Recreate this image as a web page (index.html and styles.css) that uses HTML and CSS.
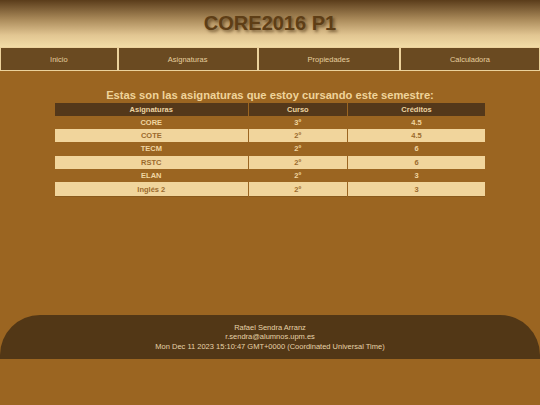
FILE: index.html
```html
<!DOCTYPE html>
<html lang="es">
<head>
<meta charset="utf-8">
<title>CORE2016 P1</title>
<link rel="stylesheet" href="styles.css">
</head>
<body>
<header class="top">
  <h1 class="title">CORE2016 P1</h1>
</header>
<nav class="menu">
  <a class="menu-item" href="#">Inicio</a>
  <a class="menu-item" href="#">Asignaturas</a>
  <a class="menu-item" href="#">Propiedades</a>
  <a class="menu-item" href="#">Calculadora</a>
</nav>
<main class="content">
  <h2 class="subtitle">Estas son las asignaturas que estoy cursando este semestre:</h2>
  <table class="subjects">
    <colgroup>
      <col class="c1"><col class="c2"><col class="c3">
    </colgroup>
    <thead>
      <tr><th>Asignaturas</th><th>Curso</th><th>Créditos</th></tr>
    </thead>
    <tbody>
      <tr><td>CORE</td><td>3º</td><td>4.5</td></tr>
      <tr><td>COTE</td><td>2º</td><td>4.5</td></tr>
      <tr><td>TECM</td><td>2º</td><td>6</td></tr>
      <tr><td>RSTC</td><td>2º</td><td>6</td></tr>
      <tr><td>ELAN</td><td>2º</td><td>3</td></tr>
      <tr><td>Inglés 2</td><td>2º</td><td>3</td></tr>
    </tbody>
  </table>
</main>
<footer class="foot">
  <p class="foot-line">Rafael Sendra Arranz</p>
  <p class="foot-line">r.sendra@alumnos.upm.es</p>
  <p class="foot-line">Mon Dec 11 2023 15:10:47 GMT+0000 (Coordinated Universal Time)</p>
</footer>
</body>
</html>
```
FILE: styles.css
```css
html, body {
  margin: 0;
  padding: 0;
}
body {
  background: #9b6521;
  font-family: "Liberation Sans", Arial, sans-serif;
  font-size: 7.5px;
  color: #f0d6a0;
  min-height: 405px;
}
.top {
  height: 47px;
  background: linear-gradient(to bottom, #5a3c1a 0%, #a88858 40%, #e2c692 75%, #f2dca6 100%);
  display: flex;
  align-items: center;
  justify-content: center;
}
.title {
  margin: 0;
  font-size: 20px;
  font-weight: bold;
  color: #5e3e16;
  text-shadow: 2px 2px 3px rgba(60, 35, 5, 0.55);
}
.menu {
  display: flex;
  gap: 2px;
  padding: 1px;
  background: #ecd29c;
  height: 22px;
}
.menu-item {
  flex: 1 1 auto;
  display: flex;
  align-items: center;
  justify-content: center;
  background: #6a4a21;
  color: #e6cf9f;
  text-decoration: none;
  font-size: 7.5px;
}
.content {
  height: 244px;
  padding-top: 18px;
  box-sizing: border-box;
}
.subtitle {
  margin: 0 0 1px;
  text-align: center;
  font-size: 11.2px;
  font-weight: bold;
  color: #f0d49a;
  line-height: 13px;
}
.subjects {
  width: 80%;
  margin: 0 auto;
  border-collapse: separate;
  border-spacing: 1px 0;
  font-size: 7.5px;
  font-weight: bold;
}
.c1 { width: 45%; }
.c2 { width: 23%; }
.c3 { width: 32%; }
.subjects th {
  background: #54381a;
  color: #ecd4a0;
  height: 12.5px;
  padding: 0;
  text-align: center;
}
.subjects td {
  height: 13.4px;
  padding: 0;
  text-align: center;
  color: #f0d6a2;
}
.subjects tbody tr:nth-child(even) td {
  background: #f1d59c;
  color: #9b6a2c;
}
.subjects tbody tr:last-child td {
  box-shadow: 0 1px 0 #8a5a1c;
}
.foot {
  background: #523716;
  border-radius: 40px 40px 0 0;
  height: 44px;
  box-sizing: border-box;
  padding-top: 8px;
  text-align: center;
  color: #e6d2a8;
}
.foot-line {
  margin: 0;
  line-height: 9.4px;
  font-size: 7.5px;
}
```
